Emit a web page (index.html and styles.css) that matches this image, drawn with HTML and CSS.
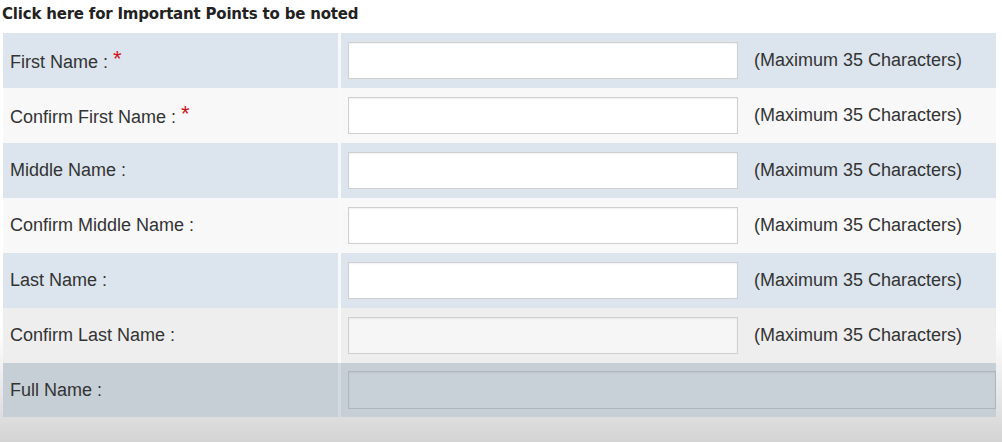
FILE: index.html
```html
<!DOCTYPE html>
<html lang="en">
<head>
    <meta charset="UTF-8">
    <meta name="viewport" content="width=device-width, initial-scale=1.0">
    <title>Name Details</title>
    <link rel="stylesheet" href="styles.css">
</head>
<body>
    <div class="points"><a href="#">Click here for Important Points to be noted</a></div>
    <form id="names">
        <table>
            <tr class="blue">
                <td class="sub">First Name : <span class="req">*</span></td>
                <td class="field"><input type="text" maxlength="35" class="wid"><span class="hint">(Maximum 35 Characters)</span></td>
            </tr>
            <tr class="light">
                <td class="sub">Confirm First Name : <span class="req">*</span></td>
                <td class="field"><input type="text" maxlength="35" class="wid"><span class="hint">(Maximum 35 Characters)</span></td>
            </tr>
            <tr class="blue">
                <td class="sub">Middle Name :</td>
                <td class="field"><input type="text" maxlength="35" class="wid"><span class="hint">(Maximum 35 Characters)</span></td>
            </tr>
            <tr class="light">
                <td class="sub">Confirm Middle Name :</td>
                <td class="field"><input type="text" maxlength="35" class="wid"><span class="hint">(Maximum 35 Characters)</span></td>
            </tr>
            <tr class="blue">
                <td class="sub">Last Name :</td>
                <td class="field"><input type="text" maxlength="35" class="wid"><span class="hint">(Maximum 35 Characters)</span></td>
            </tr>
            <tr class="light dim">
                <td class="sub">Confirm Last Name :</td>
                <td class="field"><input type="text" maxlength="35" class="wid"><span class="hint">(Maximum 35 Characters)</span></td>
            </tr>
            <tr class="blue dark last">
                <td class="sub">Full Name :</td>
                <td class="field"><input type="text" class="full" readonly></td>
            </tr>
        </table>
    </form>
</body>
</html>
```

FILE: styles.css
```css
html {
    background: linear-gradient(to bottom, #ffffff 0, #ffffff 330px, #d4d4d4 442px);
    min-height: 100%;
}
body {
    margin: 0;
    min-height: 442px;
    font-family: "Liberation Sans", Arial, sans-serif;
    color: #333;
}
.points {
    height: 33px;
    padding: 5px 0 0 2px;
    box-sizing: border-box;
    font-family: "DejaVu Sans", Verdana, sans-serif;
    font-size: 15px;
    font-weight: bold;
    letter-spacing: -0.2px;
}
.points a {
    color: #222;
    text-decoration: none;
}
table {
    border-collapse: collapse;
    margin-left: 3px;
    width: 993px;
}
td {
    padding: 0;
    height: 55px;
}
.last td {
    height: 54px;
}
.sub {
    width: 328px;
    padding-left: 7px;
    font-size: 18px;
}
.field {
    border-left: 3px solid #f7f9fb;
    padding-left: 7px;
}
.blue td {
    background-color: #dce5ed;
}
.light td {
    background-color: #f8f8f8;
}
.dim td {
    background-color: #eeeeee;
}
.dark td {
    background-color: #c6cfd6;
}
.dark .field {
    border-left-color: #d3dadf;
    padding-right: 0;
}
.req {
    color: #d0101a;
    font-size: 22px;
    line-height: 1;
    vertical-align: 2px;
}
input[type="text"] {
    height: 37px;
    box-sizing: border-box;
    border: 1px solid #cfcfcf;
    box-shadow: inset 0 1px 2px rgba(0, 0, 0, 0.06);
    background: #fff;
    vertical-align: middle;
    margin: 0;
}
input.wid {
    width: 390px;
}
.dim input.wid {
    background: #f6f6f6;
}
input.full {
    width: 648px;
    height: 38px;
    border-color: #aeb6bc;
    background: #c9d1d8;
}
.hint {
    margin-left: 16px;
    font-size: 18px;
    vertical-align: middle;
}
```
